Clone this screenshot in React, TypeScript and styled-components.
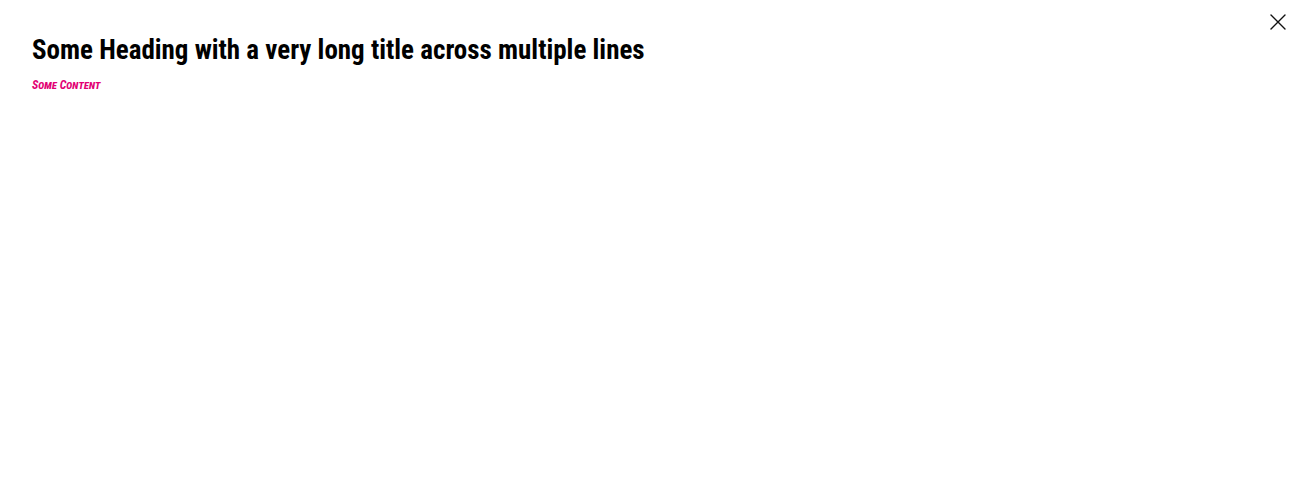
import React from "react";
import styled, { createGlobalStyle } from "styled-components";

const Global = createGlobalStyle`
  html, body { margin: 0; padding: 0; background: #fff; }
  body { font-family: "Roboto Condensed", "Roboto", sans-serif; color: #000; }
`;

const Dialog = styled.div`
  position: relative;
  width: 1300px;
  height: 500px;
  box-sizing: border-box;
  padding: 32px 32px;
  background: #fff;
`;

const Heading = styled.h1`
  margin: 0;
  font-family: "Roboto Condensed", "Roboto", sans-serif;
  font-weight: 700;
  font-size: 27px;
  line-height: 36px;
  color: #000;
`;

const Sub = styled.div`
  margin-top: 9px;
  font-family: "Roboto Condensed", "Roboto", sans-serif;
  font-weight: 700;
  font-style: italic;
  font-variant: small-caps;
  font-size: 12px;
  line-height: 16px;
  color: #e20074;
`;

const Close = styled.button`
  position: absolute;
  top: 8px;
  right: 8px;
  width: 28px;
  height: 28px;
  padding: 0;
  border: 0;
  background: transparent;
  display: flex;
  align-items: center;
  justify-content: center;
  cursor: pointer;
`;

export default function App() {
  return (
    <>
      <Global />
      <Dialog>
        <Close aria-label="Close">
          <svg width="16" height="16" viewBox="0 0 16 16" fill="none">
            <path d="M1 1L15 15M15 1L1 15" stroke="#111" strokeWidth="1.4" strokeLinecap="round" />
          </svg>
        </Close>
        <Heading>Some Heading with a very long title across multiple lines</Heading>
        <Sub>Some Content</Sub>
      </Dialog>
    </>
  );
}
